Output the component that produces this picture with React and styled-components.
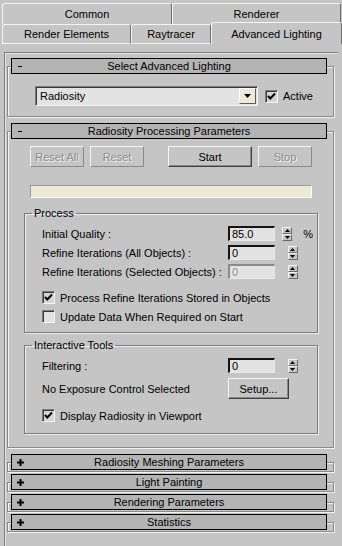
import React from 'react';
import styled, { createGlobalStyle } from 'styled-components';

const GlobalStyle = createGlobalStyle`
  html, body { margin: 0; padding: 0; background: #c5c5c5; }
  body {
    font-family: "Liberation Sans", Arial, sans-serif;
    font-size: 11px;
    color: #000;
  }
  * { box-sizing: border-box; }
`;

const Window = styled.div`
  width: 342px;
  height: 546px;
  overflow: hidden;
  background: #c5c5c5;
  display: flex;
  flex-direction: column;
  padding-top: 3px;
`;

const TabRow = styled.div`
  display: flex;
  height: ${p => p.$h}px;
  padding-left: 2px;
`;

const Tab = styled.div`
  position: relative;
  width: ${p => p.$w}px;
  height: ${p => (p.$active ? p.$h + 2 : p.$h)}px;
  margin-top: ${p => (p.$active ? -2 : 0)}px;
  z-index: ${p => (p.$active ? 1 : 0)};
  display: flex;
  align-items: center;
  justify-content: center;
  background: #c5c5c5;
  border-style: solid;
  border-width: 1px 1px ${p => (p.$bottom ? 1 : 0)}px 1px;
  border-color: #f4f4f4 #6e6e6e #f4f4f4 #f4f4f4;
  border-radius: 3px 3px 0 0;
  padding-bottom: ${p => (p.$active ? 0 : 1)}px;
`;

const Panel = styled.div`
  flex: 1;
  margin: 8px 4px 0 4px;
  border-top: 1px solid #7c7c7c;
  border-left: 1px solid #7c7c7c;
  box-shadow: inset 1px 1px 0 #e6e6e6;
  padding: 5px 4px 0 2px;
`;

const Rollout = styled.div`
  margin-bottom: ${p => p.$gap}px;
`;

const RollHeader = styled.div`
  position: relative;
  z-index: 1;
  height: 16px;
  margin: 0 7px 0 4px;
  background: #b4b4b4;
  border: 1px solid #000;
  display: flex;
  align-items: center;
  justify-content: center;
  line-height: 14px;
`;

const Toggle = styled.svg`
  position: absolute;
  left: 5px;
  top: 3px;
`;

const RollFrame = styled.div`
  margin-top: -8px;
  padding: ${p => p.$pad};
  border: 1px solid #8a8a8a;
  box-shadow: inset 1px 1px 0 #f2f2f2, 1px 1px 0 #f2f2f2;
  min-height: 10px;
`;

const SelectRow = styled.div`
  display: flex;
  align-items: center;
`;

const Dropdown = styled.div`
  width: 223px;
  height: 20px;
  background: #e2e2e2;
  border-style: solid;
  border-width: 1px;
  border-color: #7a7a7a #f4f4f4 #f4f4f4 #7a7a7a;
  box-shadow: inset 1px 1px 0 #3a3a3a;
  display: flex;
  align-items: center;
  padding: 0 1px 0 4px;
`;

const DropText = styled.span`
  flex: 1;
`;

const DropButton = styled.div`
  width: 17px;
  height: 16px;
  background: #ece9d8;
  border-style: solid;
  border-width: 1px;
  border-color: #fff #5a5a5a #5a5a5a #fff;
  display: flex;
  align-items: center;
  justify-content: center;
`;

const CheckLabel = styled.label`
  display: flex;
  align-items: center;
  gap: ${p => p.$gap || 5}px;
  margin-left: ${p => p.$ml || 0}px;
  margin-top: ${p => p.$mt || 0}px;
  height: 13px;
`;

const Box = styled.span`
  width: 13px;
  height: 13px;
  background: ${p => (p.$checked ? '#d6d6d6' : '#e2e2e2')};
  border-style: solid;
  border-width: 1px;
  border-color: #7a7a7a #f6f6f6 #f6f6f6 #7a7a7a;
  box-shadow: inset 1px 1px 0 #3a3a3a;
  display: flex;
  align-items: center;
  justify-content: center;
`;

const ButtonRow = styled.div`
  display: flex;
  margin-left: 6px;
  height: 21px;
`;

const Button = styled.div`
  width: ${p => p.$w}px;
  height: 21px;
  margin-left: ${p => p.$ml || 0}px;
  display: flex;
  align-items: center;
  justify-content: center;
  border-style: solid;
  border-width: 1px;
  border-color: ${p =>
    p.$disabled ? '#f4f4f4 #8a8a8a #8a8a8a #f4f4f4' : '#f4f4f4 #404040 #404040 #f4f4f4'};
  box-shadow: ${p => (p.$disabled ? 'none' : 'inset -1px -1px 0 #8a8a8a')};
  color: ${p => (p.$disabled ? '#8c8c8c' : '#000')};
  text-shadow: ${p => (p.$disabled ? '1px 1px 0 #f4f4f4' : 'none')};
`;

const Progress = styled.div`
  margin: 18px 0 0 6px;
  width: 282px;
  height: 13px;
  background: #ece9d8;
  border-style: solid;
  border-width: 1px;
  border-color: #9a9a9a #fafafa #fafafa #9a9a9a;
`;

const Group = styled.fieldset`
  margin: ${p => p.$mt}px 0 0 0;
  padding: 0;
  width: 294px;
  border: 1px solid #7a7a7a;
  box-shadow: inset 1px 1px 0 #eeeeee, 1px 1px 0 #eeeeee;
  min-inline-size: 0;
`;

const Legend = styled.legend`
  margin-left: 7px;
  padding: 0 2px;
  line-height: 13px;
`;

const GroupBody = styled.div`
  padding: ${p => p.$pad};
  display: flex;
  flex-direction: column;
`;

const ParamRow = styled.div`
  display: grid;
  grid-template-columns: 186px auto auto auto;
  align-items: center;
  height: ${p => p.$h || 15}px;
  margin-top: ${p => p.$mt || 0}px;
`;

const Field = styled.div`
  width: 47px;
  height: 15px;
  background: #e2e2e2;
  border-style: solid;
  border-width: 2px 1px 1px 2px;
  border-color: ${p => (p.$disabled ? '#8a8a8a' : '#141414')} #e8e8e8 #e8e8e8
    ${p => (p.$disabled ? '#8a8a8a' : '#141414')};
  padding-left: 2px;
  line-height: 12px;
  color: ${p => (p.$disabled ? '#909090' : '#000')};
`;

const Spinner = styled.div`
  width: 10px;
  height: 14px;
  margin-left: 3px;
  display: flex;
  flex-direction: column;
`;

const SpinHalf = styled.div`
  flex: 1;
  background: #c5c5c5;
  border-style: solid;
  border-width: 1px;
  border-color: #f4f4f4 #6a6a6a #6a6a6a #f4f4f4;
  display: flex;
  align-items: center;
  justify-content: center;
`;

const Unit = styled.span`
  margin-left: 7px;
`;

const Arrow = ({ dir, w = 5, h = 3 }) => (
  <svg width={w} height={h} viewBox={`0 0 ${w} ${h}`}>
    <polygon
      points={dir === 'up' ? `${w / 2},0 ${w},${h} 0,${h}` : `0,0 ${w},0 ${w / 2},${h}`}
      fill="#000"
    />
  </svg>
);

const Check = () => (
  <svg width="9" height="9" viewBox="0 0 9 9">
    <polyline points="1,4 3.3,6.5 8,1.5" fill="none" stroke="#000" strokeWidth="2" />
  </svg>
);

const CheckBox = ({ checked, label, ...rest }) => (
  <CheckLabel {...rest}>
    <Box $checked={checked}>{checked && <Check />}</Box>
    {label}
  </CheckLabel>
);

const Spin = ({ value, disabled, unit }) => (
  <>
    <Field $disabled={disabled}>{value}</Field>
    <Spinner>
      <SpinHalf><Arrow dir="up" /></SpinHalf>
      <SpinHalf><Arrow dir="down" /></SpinHalf>
    </Spinner>
    {unit ? <Unit>{unit}</Unit> : <span />}
  </>
);

const RollTitle = ({ open, children }) => (
  <RollHeader>
    <Toggle width="7" height="9" viewBox="0 0 7 9">
      {open ? (
        <rect x="1" y="4" width="4" height="1" fill="#000" />
      ) : (
        <path d="M2.5 1h2v7h-2z M0 3.5h7v2h-7z" fill="#000" />
      )}
    </Toggle>
    {children}
  </RollHeader>
);

const collapsed = [
  'Radiosity Meshing Parameters',
  'Light Painting',
  'Rendering Parameters',
  'Statistics',
];

export default function App() {
  return (
    <Window>
      <GlobalStyle />
      <TabRow $h={21}>
        <Tab $w={170} $h={21}>Common</Tab>
        <Tab $w={169} $h={21}>Renderer</Tab>
      </TabRow>
      <TabRow $h={20}>
        <Tab $w={129} $h={20} $bottom>Render Elements</Tab>
        <Tab $w={80} $h={20} $bottom>Raytracer</Tab>
        <Tab $w={131} $h={20} $active>Advanced Lighting</Tab>
      </TabRow>

      <Panel>
        <Rollout $gap={6}>
          <RollTitle open>Select Advanced Lighting</RollTitle>
          <RollFrame $pad="19px 0 10px 27px">
            <SelectRow>
              <Dropdown>
                <DropText>Radiosity</DropText>
                <DropButton><Arrow dir="down" w={7} h={4} /></DropButton>
              </Dropdown>
              <CheckBox checked label="Active" $ml={7} />
            </SelectRow>
          </RollFrame>
        </Rollout>

        <Rollout $gap={6}>
          <RollTitle open>Radiosity Processing Parameters</RollTitle>
          <RollFrame $pad="14px 0 13px 16px">
            <ButtonRow>
              <Button $w={54} $disabled>Reset All</Button>
              <Button $w={54} $ml={6} $disabled>Reset</Button>
              <Button $w={84} $ml={24}>Start</Button>
              <Button $w={54} $ml={6} $disabled>Stop</Button>
            </ButtonRow>
            <Progress />

            <Group $mt={9}>
              <Legend>Process</Legend>
              <GroupBody $pad="6px 0 9px 17px">
                <ParamRow>
                  <span>Initial Quality :</span>
                  <Spin value="85.0" unit="%" />
                </ParamRow>
                <ParamRow $mt={4}>
                  <span>Refine Iterations (All Objects) :</span>
                  <Spin value="0" />
                </ParamRow>
                <ParamRow $mt={4}>
                  <span>Refine Iterations (Selected Objects) :</span>
                  <Spin value="0" disabled />
                </ParamRow>
                <CheckBox checked label="Process Refine Iterations Stored in Objects" $mt={12} />
                <CheckBox label="Update Data When Required on Start" $mt={6} />
              </GroupBody>
            </Group>

            <Group $mt={6}>
              <Legend>Interactive Tools</Legend>
              <GroupBody $pad="6px 0 11px 17px">
                <ParamRow>
                  <span>Filtering :</span>
                  <Spin value="0" />
                </ParamRow>
                <ParamRow $h={21} $mt={5}>
                  <span>No Exposure Control Selected</span>
                  <Button $w={61}>Setup...</Button>
                </ParamRow>
                <CheckBox checked label="Display Radiosity in Viewport" $mt={10} />
              </GroupBody>
            </Group>
          </RollFrame>
        </Rollout>

        {collapsed.map(t => (
          <Rollout key={t} $gap={2}>
            <RollTitle>{t}</RollTitle>
            <RollFrame $pad="0" />
          </Rollout>
        ))}
      </Panel>
    </Window>
  );
}
